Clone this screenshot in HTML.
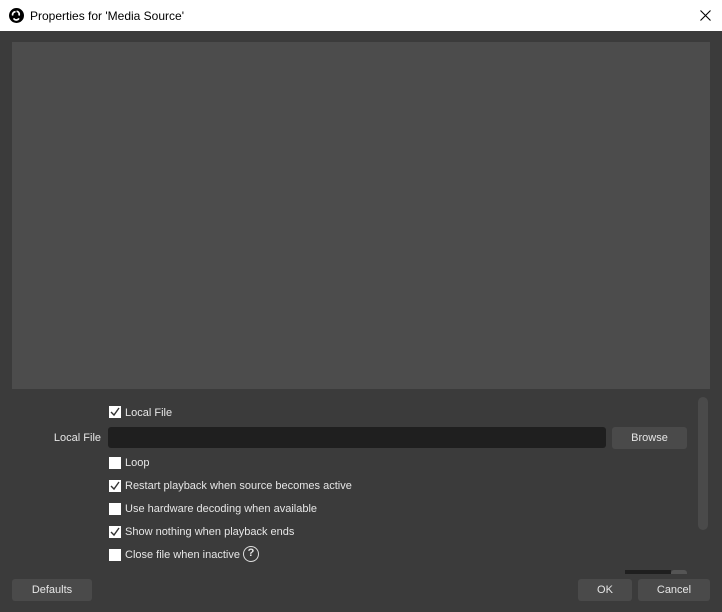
<!DOCTYPE html>
<html><head><style>
*{margin:0;padding:0;box-sizing:border-box}
body{width:722px;height:612px;background:#3b3b3b;font-family:"Liberation Sans",sans-serif;font-size:11px;color:#e6e6e6;position:relative;overflow:hidden}
.t{position:absolute;left:0;top:0;width:722px;height:31px;background:#fff;color:#000;font-size:12px}
.a{position:absolute}
.cb{position:absolute;left:109px;width:12px;height:12px;background:#fff}
.cb svg{position:absolute;left:1px;top:1px}
.lbl{position:absolute;left:125px}
.btn{position:absolute;background:#4a4a4a;border-radius:3px;text-align:center;line-height:21px;color:#e6e6e6}
</style></head><body>
<div class="t">
<svg class="a" style="left:9px;top:8px" width="15" height="15" viewBox="0 0 16 16"><circle cx="8" cy="8" r="8" fill="#000"/><path d="M8 3.5 A3 3 0 0 1 10.5 8" stroke="#fff" stroke-width="1.8" fill="none"/><path d="M10.5 11 A3 3 0 0 1 5 11" stroke="#fff" stroke-width="1.8" fill="none"/><path d="M4 8 A3 3 0 0 1 7 4" stroke="#fff" stroke-width="1.8" fill="none"/></svg>
<div class="a" style="left:30px;top:9px">Properties for 'Media Source'</div>
<svg class="a" style="left:700px;top:10px" width="11" height="11"><path d="M0.5 0.5 L10.5 10.5 M10.5 0.5 L0.5 10.5" stroke="#000" stroke-width="1.1"/></svg>
</div>
<div class="a" style="left:12px;top:42px;width:698px;height:347px;background:#4c4c4c"></div>
<div class="cb" style="top:406px"><svg width="10" height="10"><path d="M1 5 L4 8 L9 1" stroke="#333" stroke-width="1.4" fill="none"/></svg></div>
<div class="lbl" style="top:407px">Local File</div>
<div class="a" style="left:0;width:101px;text-align:right;top:432px">Local File</div>
<div class="a" style="left:108px;top:427px;width:498px;height:21px;background:#1f1f1f;border-radius:3px"></div>
<div class="btn" style="left:612px;top:427px;width:75px;line-height:22px">Browse</div>
<div class="cb" style="top:457px"></div><div class="lbl" style="top:457px">Loop</div>
<div class="cb" style="top:480px"><svg width="10" height="10"><path d="M1 5 L4 8 L9 1" stroke="#333" stroke-width="1.4" fill="none"/></svg></div>
<div class="lbl" style="top:480px">Restart playback when source becomes active</div>
<div class="cb" style="top:503px"></div><div class="lbl" style="top:503px">Use hardware decoding when available</div>
<div class="cb" style="top:526px"><svg width="10" height="10"><path d="M1 5 L4 8 L9 1" stroke="#333" stroke-width="1.4" fill="none"/></svg></div>
<div class="lbl" style="top:526px">Show nothing when playback ends</div>
<div class="cb" style="top:549px"></div><div class="lbl" style="top:549px">Close file when inactive</div>
<div class="a" style="left:243px;top:546px;width:16px;height:16px;border:1.5px solid #ddd;border-radius:50%;font-size:11px;text-align:center;line-height:13px;font-weight:bold">?</div>
<div class="a" style="left:698px;top:397px;width:10px;height:133px;background:#4a4a4a;border-radius:5px"></div>
<div class="a" style="left:625px;top:570px;width:46px;height:4px;background:#1f1f1f"></div>
<div class="a" style="left:671px;top:570px;width:16px;height:4px;background:#555;border-radius:3px 3px 0 0"></div>
<div class="btn" style="left:12px;top:579px;width:80px;line-height:22px">Defaults</div>
<div class="btn" style="left:578px;top:579px;width:54px;line-height:22px">OK</div>
<div class="btn" style="left:638px;top:579px;width:72px;line-height:22px">Cancel</div>
</body></html>
